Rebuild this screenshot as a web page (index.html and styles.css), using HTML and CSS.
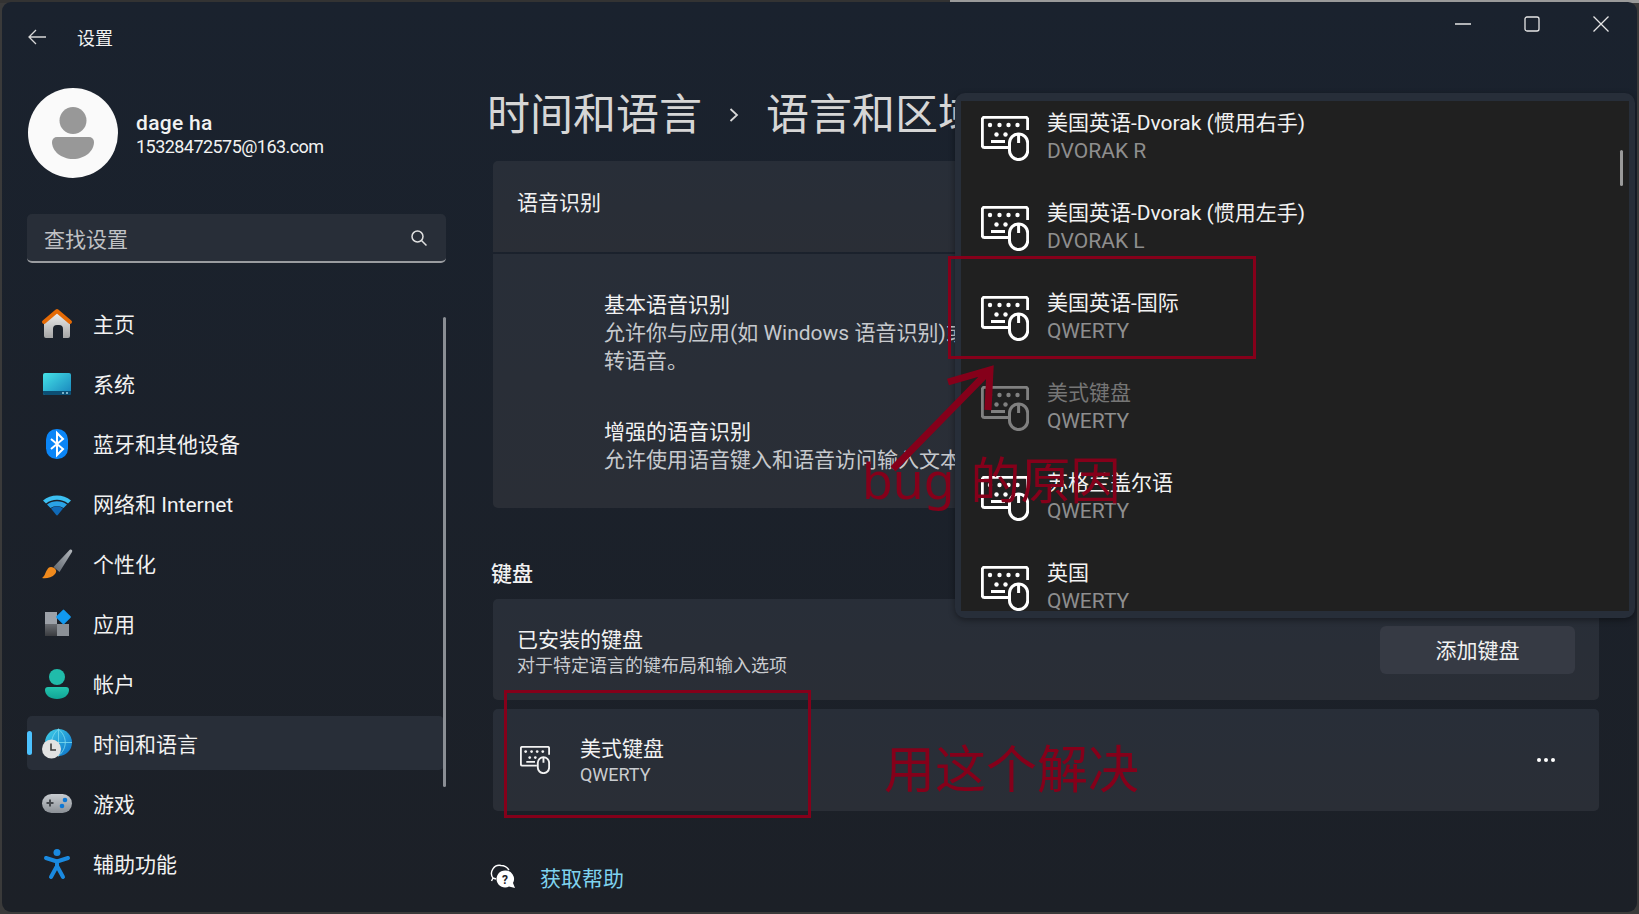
FILE: index.html
```html
<!DOCTYPE html>
<html lang="zh-CN">

<head>
    <meta charset="UTF-8">
    <title>设置</title>
    <link rel="stylesheet" href="styles.css">
</head>

<body>
    <svg class="defs" width="0" height="0">
        <defs>
            <linearGradient id="g-home" x1="0" y1="0" x2="0" y2="1"><stop offset="0" stop-color="#f0f0f0"/><stop offset="1" stop-color="#a5a5a5"/></linearGradient>
            <linearGradient id="g-sys" x1="0" y1="0" x2="1" y2="1"><stop offset="0" stop-color="#45e3e8"/><stop offset="1" stop-color="#1782bb"/></linearGradient>
            <linearGradient id="g-brush" x1="1" y1="0" x2="0" y2="1"><stop offset="0" stop-color="#b4b8bd"/><stop offset="1" stop-color="#5d646c"/></linearGradient>
            <linearGradient id="g-dark" x1="0" y1="0" x2="0" y2="1"><stop offset="0" stop-color="#6a6d72"/><stop offset="1" stop-color="#3a3c40"/></linearGradient>
            <linearGradient id="g-teal" x1="0" y1="0" x2="0" y2="1"><stop offset="0" stop-color="#24c4ad"/><stop offset="1" stop-color="#10a596"/></linearGradient>
            <linearGradient id="g-globe" x1="0" y1="0" x2="1" y2="1"><stop offset="0" stop-color="#40d0e8"/><stop offset="1" stop-color="#0c70c8"/></linearGradient>
            <linearGradient id="g-pad" x1="0" y1="0" x2="0" y2="1"><stop offset="0" stop-color="#c8ccd0"/><stop offset="1" stop-color="#8b9096"/></linearGradient>
            <symbol id="kbd" viewBox="0 0 48 45">
                <path d="M27 31.500H3.500a2.200 2.200 0 0 1-2.200-2.200V3.500a2.200 2.200 0 0 1 2.200-2.200h41a2.200 2.200 0 0 1 2.200 2.200V14" fill="none" stroke="currentColor" stroke-width="3"/>
                <rect x="28.500" y="18" width="18.200" height="25.600" rx="9.100" fill="none" stroke="currentColor" stroke-width="3"/>
                <path d="M37.600 19v8M10 25.500h14" fill="none" stroke="currentColor" stroke-width="3"/>
                <g fill="currentColor">
                    <circle cx="9" cy="9" r="2.200"/><circle cx="18.500" cy="9" r="2.200"/><circle cx="27.500" cy="9" r="2.200"/><circle cx="36.500" cy="9" r="2.200"/>
                    <circle cx="15.500" cy="18.500" r="2.200"/><circle cx="24.500" cy="18.500" r="2.200"/>
                </g>
            </symbol>
        </defs>
    </svg>

    <div class="window">
        <header class="titlebar">
            <svg class="back-icon" width="20" height="16" viewBox="0 0 20 16"><path d="M19 8H2M9 1 2 8l7 7" fill="none" stroke="#d8d8d8" stroke-width="1.300"/></svg>
            <span class="app-name">设置</span>
            <div class="win-controls">
                <svg width="16" height="16" viewBox="0 0 16 16"><path d="M0 8h16" stroke="#e6e6e6" stroke-width="1.400"/></svg>
                <svg width="16" height="16" viewBox="0 0 16 16"><rect x="1" y="1" width="14" height="14" rx="2" fill="none" stroke="#e6e6e6" stroke-width="1.300"/></svg>
                <svg width="16" height="16" viewBox="0 0 16 16"><path d="M.5.5l15 15M15.500.5l-15 15" stroke="#e6e6e6" stroke-width="1.300"/></svg>
            </div>
        </header>

        <div class="columns">
            <aside class="sidebar">
                <div class="profile">
                    <svg width="90" height="90" viewBox="0 0 90 90">
                        <circle cx="45" cy="45" r="45" fill="#fafafa"/>
                        <circle cx="45" cy="32.500" r="13.500" fill="#989898"/>
                        <path d="M24 54a5 5 0 0 1 5-5h32a5 5 0 0 1 5 5c0 9-9 17-21 17s-21-8-21-17z" fill="#989898"/>
                    </svg>
                    <div class="profile-text">
                        <div class="profile-name">dage ha</div>
                        <div class="profile-mail">15328472575@163.com</div>
                    </div>
                </div>

                <div class="search">
                    <span>查找设置</span>
                    <svg width="18" height="18" viewBox="0 0 18 18"><circle cx="7.500" cy="7.500" r="5.500" fill="none" stroke="#e0e0e0" stroke-width="1.500"/><path d="M11.500 11.500l5 5" stroke="#e0e0e0" stroke-width="1.500"/></svg>
                </div>

                <nav class="nav">
                    <a class="nav-item">
                        <svg class="nav-icon" viewBox="0 0 34 34"><path d="M4 14 17 4l13 10v14a2 2 0 0 1-2 2h-5V21a4 4 0 0 0-4-4h-2a4 4 0 0 0-4 4v9H6a2 2 0 0 1-2-2z" fill="url(#g-home)"/><path d="M4 14 17 3l13 11" fill="none" stroke="#e56a05" stroke-width="4" stroke-linejoin="round" stroke-linecap="round"/></svg>
                        主页
                    </a>
                    <a class="nav-item">
                        <svg class="nav-icon" viewBox="0 0 34 34"><rect x="3" y="5" width="28" height="22" rx="2" fill="url(#g-sys)"/><path d="M3 23h28v2a2 2 0 0 1-2 2H5a2 2 0 0 1-2-2z" fill="#0c4f74"/><path d="M22 25h2M26 25h2" stroke="#9fd4e6" stroke-width="1.500"/></svg>
                        系统
                    </a>
                    <a class="nav-item">
                        <svg class="nav-icon" viewBox="0 0 34 34"><rect x="6" y="1" width="22" height="30" rx="10.500" fill="#0a85f6"/><path d="M11 11l12 10-6 6V5l6 6-12 10" fill="none" stroke="#fff" stroke-width="2"/></svg>
                        蓝牙和其他设备
                    </a>
                    <a class="nav-item">
                        <svg class="nav-icon" viewBox="0 0 34 34"><path d="M3 12.500a22 22 0 0 1 28 0l-3 3a18 18 0 0 0-22 0z" fill="#3cc0f2"/><path d="M7 16.500a17 17 0 0 1 20 0l-3.500 3.500a12 12 0 0 0-13 0z" fill="#2aa3e6"/><path d="M11 20.500a10 10 0 0 1 12 0l-5 6.300a1.300 1.300 0 0 1-2 0z" fill="#1069b6"/></svg>
                        网络和 Internet
                    </a>
                    <a class="nav-item">
                        <svg class="nav-icon" viewBox="0 0 34 34"><path d="M29.500 2c1.500-1 3.500 0 2.500 2L19.500 24 13.500 19z" fill="url(#g-brush)"/><path d="M11 19c4 0 7 4 4 7-3 4-10 5-13 4 3-2 3-5 5-8 1-2 2-3 4-3z" fill="#f08a1d"/></svg>
                        个性化
                    </a>
                    <a class="nav-item">
                        <svg class="nav-icon" viewBox="0 0 34 34"><rect x="5" y="4" width="12" height="12" fill="#9ca1a8"/><rect x="5" y="16" width="12" height="12" fill="url(#g-dark)"/><rect x="17" y="16" width="12" height="12" fill="#8b9096"/><rect x="18" y="3.500" width="11" height="11" rx="1" transform="rotate(45 23.500 9)" fill="#1199f0"/></svg>
                        应用
                    </a>
                    <a class="nav-item">
                        <svg class="nav-icon" viewBox="0 0 34 34"><circle cx="17" cy="9" r="8" fill="#20bcaa"/><path d="M5 22a3 3 0 0 1 3-3h18a3 3 0 0 1 3 3c0 5-5 9-12 9S5 27 5 22z" fill="url(#g-teal)"/></svg>
                        帐户
                    </a>
                    <a class="nav-item active">
                        <svg class="nav-icon" viewBox="0 0 34 34"><circle cx="18.500" cy="14.500" r="13.500" fill="url(#g-globe)"/><path d="M5 14.500h27M18.500 1v27M18.500 1c-9 8-9 19 0 27M18.500 1c9 8 9 19 0 27" fill="none" stroke="#7fdcf0" stroke-width=".8"/><circle cx="11.500" cy="21" r="9.500" fill="#e2e2e2"/><path d="M11 15.500V22h5" fill="none" stroke="#3a3a3a" stroke-width="1.600"/></svg>
                        时间和语言
                    </a>
                    <a class="nav-item">
                        <svg class="nav-icon" viewBox="0 0 34 34"><rect x="2" y="6" width="30" height="19" rx="9.500" fill="url(#g-pad)"/><path d="M10 11.500v7M6.500 15h7" stroke="#44484d" stroke-width="2"/><circle cx="25" cy="12" r="2.300" fill="#0f78d4"/><circle cx="22" cy="18" r="2.300" fill="#0f78d4"/></svg>
                        游戏
                    </a>
                    <a class="nav-item">
                        <svg class="nav-icon" viewBox="0 0 34 34"><circle cx="17" cy="4.500" r="3.500" fill="#1a8ae0"/><path d="M6 10l11 3.500L28 10M17 13v7M17 18l-6 11M17 18l6 11" fill="none" stroke="#1a8ae0" stroke-width="4" stroke-linecap="round" stroke-linejoin="round"/></svg>
                        辅助功能
                    </a>
                    <div class="nav-scroll"></div>
                </nav>
            </aside>

            <main class="content">
                <h1 class="breadcrumb">
                    <span>时间和语言</span>
                    <svg width="10" height="14" viewBox="0 0 10 14"><path d="M1.500 1l6.500 6-6.500 6" fill="none" stroke="#d8d8d8" stroke-width="1.800"/></svg>
                    <span>语言和区域</span>
                </h1>

                <section class="card card-head">语音识别</section>
                <section class="card card-body">
                    <div class="speech-item">
                        <div class="item-title">基本语音识别</div>
                        <div class="item-desc">允许你与应用(如 Windows 语音识别)或<br>转语音。</div>
                    </div>
                    <div class="speech-item">
                        <div class="item-title">增强的语音识别</div>
                        <div class="item-desc">允许使用语音键入和语音访问输入文本</div>
                    </div>
                </section>

                <h2 class="section-label">键盘</h2>
                <section class="card card-row">
                    <div class="row-text">
                        <div class="item-title">已安装的键盘</div>
                        <div class="row-desc">对于特定语言的键布局和输入选项</div>
                    </div>
                    <button class="add-btn">添加键盘</button>
                </section>
                <section class="card card-kbd">
                    <svg class="kbd-small"><use href="#kbd"/></svg>
                    <div class="row-text">
                        <div class="item-title">美式键盘</div>
                        <div class="row-desc">QWERTY</div>
                    </div>
                    <svg class="more" width="18" height="4" viewBox="0 0 18 4"><circle cx="2" cy="2" r="2" fill="#fff"/><circle cx="9" cy="2" r="2" fill="#fff"/><circle cx="16" cy="2" r="2" fill="#fff"/></svg>
                </section>

                <div class="help">
                    <svg width="26" height="26" viewBox="0 0 26 26">
                        <path d="M3 14a8 8 0 0 1 8-12.500c3.500 0 6 1.500 8 4.500M3 14l-1.500 3M3 14l3 1" fill="none" stroke="#fff" stroke-width="1.400"/>
                        <path d="M15 6.500a8.500 8.500 0 1 0 4 16l6 1.500-2-5a8.500 8.500 0 0 0-8-12.500z" fill="#fff"/>
                        <text x="15" y="19.500" class="help-mark">?</text>
                    </svg>
                    <a class="help-link">获取帮助</a>
                </div>
            </main>
        </div>

        <!-- layout picker open over the page -->
        <div class="picker">
            <div class="picker-list">
                <div class="picker-item"><svg class="kbd-big"><use href="#kbd"/></svg><div><div class="picker-name">美国英语-Dvorak (惯用右手)</div><div class="picker-sub">DVORAK R</div></div></div>
                <div class="picker-item"><svg class="kbd-big"><use href="#kbd"/></svg><div><div class="picker-name">美国英语-Dvorak (惯用左手)</div><div class="picker-sub">DVORAK L</div></div></div>
                <div class="picker-item"><svg class="kbd-big"><use href="#kbd"/></svg><div><div class="picker-name">美国英语-国际</div><div class="picker-sub">QWERTY</div></div></div>
                <div class="picker-item disabled"><svg class="kbd-big"><use href="#kbd"/></svg><div><div class="picker-name">美式键盘</div><div class="picker-sub">QWERTY</div></div></div>
                <div class="picker-item"><svg class="kbd-big"><use href="#kbd"/></svg><div><div class="picker-name">苏格兰盖尔语</div><div class="picker-sub">QWERTY</div></div></div>
                <div class="picker-item"><svg class="kbd-big"><use href="#kbd"/></svg><div><div class="picker-name">英国</div><div class="picker-sub">QWERTY</div></div></div>
            </div>
            <div class="picker-scroll"></div>
        </div>

        <!-- red notes drawn on the screenshot -->
        <div class="note-box box-a"></div>
        <div class="note-box box-b"></div>
        <svg class="note-arrow" width="110" height="130" viewBox="0 0 110 130"><path d="M5 121 102 22M60 34 102 22 100 62" fill="none" stroke="#85001a" stroke-width="7"/></svg>
        <div class="note-text text-a">bug 的原因</div>
        <div class="note-text text-b">用这个解决</div>
    </div>
</body>

</html>
```

FILE: styles.css
```css
* {
    margin: 0;
    padding: 0;
    box-sizing: border-box;
}

html,
body {
    height: 914px;
    overflow: hidden;
}

body {
    background: linear-gradient(90deg, #333 0 950px, #9a9a9a 950px) top / 100% 3px no-repeat, #3a3a3a;
    font-family: Roboto, "Noto Sans CJK SC", sans-serif;
    color: #f2f2f2;
    font-size: 21px;
}

.defs {
    position: absolute;
}

.window {
    position: relative;
    width: 1635px;
    height: 910px;
    margin: 2px;
    border-radius: 9px;
    background: linear-gradient(180deg, #1a222e, #1c2027);
    display: flex;
    flex-direction: column;
    overflow: hidden;
}

.titlebar {
    height: 70px;
    flex: none;
    display: flex;
    align-items: center;
    padding-left: 25px;
}

.app-name {
    margin-left: 30px;
    font-size: 18px;
}

.win-controls {
    margin-left: auto;
    margin-right: 28px;
    align-self: flex-start;
    margin-top: 14px;
    display: flex;
    gap: 53px;
}

.columns {
    flex: 1;
    display: flex;
    min-height: 0;
}

/* sidebar */
.sidebar {
    width: 491px;
    flex: none;
    padding: 16px 47px 0 25px;
}

.profile {
    display: flex;
    align-items: center;
    padding-left: 1px;
    gap: 18px;
}

.profile-name {
    margin-top: 4px;
    font-weight: 500;
    font-size: 21px;
    line-height: 24px;
    letter-spacing: 0.3px;
}

.profile-mail {
    font-size: 18px;
    line-height: 24px;
    letter-spacing: -0.55px;
}

.search {
    margin-top: 36px;
    height: 49px;
    padding: 0 18px 0 17px;
    background: #282e38;
    border-bottom: 2px solid #9a9ca0;
    border-radius: 5px;
    display: flex;
    align-items: center;
    justify-content: space-between;
    color: #c0c2c5;
}

.nav {
    position: relative;
    margin-top: 33px;
    display: flex;
    flex-direction: column;
    gap: 6px;
}

.nav-item {
    position: relative;
    height: 54px;
    margin-right: 2px;
    padding-left: 13px;
    border-radius: 5px;
    display: flex;
    align-items: center;
    gap: 19px;
}

.nav-item.active {
    background: #282e38;
}

.nav-item.active::before {
    content: "";
    position: absolute;
    left: 0;
    top: 15px;
    width: 5px;
    height: 24px;
    border-radius: 3px;
    background: #4cc2ff;
}

.nav-icon {
    width: 34px;
    height: 34px;
    margin-top: 4px;
    flex: none;
}

.nav-scroll {
    position: absolute;
    right: 0;
    top: 21px;
    width: 3px;
    height: 470px;
    border-radius: 2px;
    background: #8a8e94;
}

/* main column */
.content {
    flex: 1;
    padding-right: 38px;
    min-width: 0;
}

.breadcrumb {
    margin: 15px 0 18px -6px;
    height: 56px;
    font-size: 43px;
    font-weight: 400;
    line-height: 56px;
    color: #d6d6d6;
    white-space: nowrap;
    display: flex;
    align-items: center;
    gap: 27px;
}

.card {
    background: linear-gradient(180deg, #282e38, #2a2e36);
    border-radius: 5px;
}

.card-head {
    height: 91px;
    padding: 26px 0 0 24px;
    line-height: 32px;
    border-radius: 5px 5px 0 0;
}

.card-body {
    height: 254px;
    margin-top: 2px;
    padding: 37px 0 0 111px;
    border-radius: 0 0 5px 5px;
    white-space: nowrap;
}

.speech-item + .speech-item {
    margin-top: 43px;
}

.item-title {
    line-height: 28px;
}

.item-desc {
    line-height: 28px;
    color: #c6c9cd;
}

.section-label {
    margin: 51px 0 10px -2px;
    font-size: 21px;
    font-weight: 500;
    line-height: 30px;
}

.card-row {
    height: 101px;
    padding: 0 24px;
    display: flex;
    align-items: center;
    justify-content: space-between;
}

.card-row .row-text {
    padding-top: 5px;
}

.card-kbd .row-text {
    padding-top: 2px;
}

.row-desc {
    font-size: 18px;
    line-height: 24px;
    color: #c9ccd0;
}

.add-btn {
    width: 195px;
    height: 48px;
    padding-bottom: 2px;
    border: none;
    border-radius: 6px;
    background: #363a44;
    color: #f2f2f2;
    font: inherit;
}

.card-kbd {
    height: 102px;
    margin-top: 9px;
    padding: 0 44px 0 27px;
    display: flex;
    align-items: center;
}

.kbd-small {
    width: 30px;
    height: 28px;
    margin-right: 30px;
}

.more {
    margin-left: auto;
}

.help {
    margin: 51px 0 0 -3px;
    display: flex;
    align-items: center;
    gap: 24px;
    height: 30px;
}

.help-link {
    color: #7fd3ef;
}

.help-mark {
    font-size: 12px;
    font-weight: 700;
    fill: #1c2027;
    text-anchor: middle;
}

/* popup list */
.picker {
    position: absolute;
    left: 953px;
    top: 91px;
    width: 680px;
    height: 525px;
    padding: 8px 6px 7px;
    background: #272e39;
    border-radius: 10px;
    box-shadow: 0 2px 6px rgba(0, 0, 0, 0.4);
}

.picker-list {
    height: 100%;
    background: #202020;
    overflow: hidden;
}

.picker-item {
    height: 90px;
    padding: 4px 0 0 20px;
    display: flex;
    align-items: flex-start;
    gap: 18px;
}

.picker-name {
    line-height: 28px;
    margin-top: 4px;
}

.picker-sub {
    line-height: 28px;
    color: #8e8e8e;
}

.kbd-big {
    width: 48px;
    height: 45px;
    margin-top: 11px;
    color: #fff;
}

.picker-item.disabled .kbd-big {
    color: #808080;
}

.picker-item.disabled .picker-name {
    color: #767676;
}

.picker-scroll {
    position: absolute;
    right: 12px;
    top: 57px;
    width: 3px;
    height: 36px;
    border-radius: 2px;
    background: #9a9a9a;
}

/* annotations */
.note-box {
    position: absolute;
    border: 3px solid #85001a;
}

.box-a {
    left: 946px;
    top: 254px;
    width: 308px;
    height: 103px;
}

.box-b {
    left: 502px;
    top: 688px;
    width: 307px;
    height: 128px;
}

.note-arrow {
    position: absolute;
    left: 886px;
    top: 346px;
}

.note-text {
    position: absolute;
    font-family: "Noto Sans", "Noto Sans CJK SC", sans-serif;
    color: #85001a;
    white-space: nowrap;
    line-height: 60px;
}

.text-a {
    left: 860px;
    top: 448px;
    font-size: 50px;
    word-spacing: 3px;
}

.text-b {
    left: 882px;
    top: 736px;
    font-size: 51px;
}
```
